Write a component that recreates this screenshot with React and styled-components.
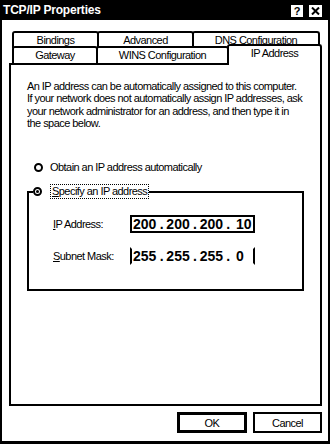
import React from "react";
import styled, { createGlobalStyle } from "styled-components";

const Global = createGlobalStyle`
  html, body { margin: 0; padding: 0; background: #fff; }
  body { font-family: "Liberation Sans", Arial, sans-serif; color: #000; }
  * { box-sizing: border-box; }
`;

const Window = styled.div`
  width: 330px;
  height: 444px;
  border-left: 2px solid #000;
  border-right: 2px solid #000;
  border-bottom: 3px solid #000;
  background: #fff;
  display: flex;
  flex-direction: column;
`;

const TitleBar = styled.div`
  height: 20px;
  flex: none;
  background: #000;
  color: #fff;
  display: flex;
  align-items: center;
  padding: 0 6px 0 1px;
  gap: 6px;
`;

const Title = styled.div`
  flex: 1;
  font-weight: bold;
  font-size: 12px;
  letter-spacing: -0.2px;
  white-space: nowrap;
`;

const CapButton = styled.div`
  width: ${(p) => p.$w}px;
  height: 12px;
  margin-top: 2px;
  background: #fff;
  color: #000;
  display: flex;
  align-items: center;
  justify-content: center;
  font-weight: bold;
  font-size: 11px;
  line-height: 1;
`;

const Body = styled.div`
  flex: 1;
  display: flex;
  flex-direction: column;
  padding: 11px 6px 8px 7px;
  font-size: 11px;
  letter-spacing: -0.55px;
`;

const TabRow = styled.div`
  display: flex;
  align-items: flex-end;
  height: 17px;
  padding-left: 3px;
  margin-top: ${(p) => (p.$second ? "-2px" : "0")};
`;

const Tab = styled.div`
  width: ${(p) => p.$w}px;
  height: ${(p) => (p.$active ? 21 : 17)}px;
  margin-bottom: ${(p) => (p.$active ? "-2px" : "0")};
  position: ${(p) => (p.$active ? "relative" : "static")};
  z-index: ${(p) => (p.$active ? 2 : "auto")};
  border: 2px solid #000;
  border-bottom: none;
  border-radius: 3px 3px 0 0;
  background: #fff;
  display: flex;
  align-items: center;
  justify-content: center;
  padding-bottom: ${(p) => (p.$active ? 6 : 2)}px;
  white-space: nowrap;
  & + & { margin-left: -2px; }
`;

const Panel = styled.div`
  flex: 1;
  border: 2px solid #000;
  padding: 15px 16px 0 16px;
  display: flex;
  flex-direction: column;
`;

const Para = styled.p`
  margin: 0;
  line-height: 12.3px;
  white-space: nowrap;
`;

const RadioRow = styled.label`
  display: flex;
  align-items: center;
  gap: 7px;
  height: 14px;
  margin: 31px 0 10px 7px;
`;

const Radio = styled.span`
  width: 9px;
  height: 9px;
  flex: none;
  border: 2px solid #000;
  border-radius: 50%;
  display: flex;
  align-items: center;
  justify-content: center;
  &::after {
    content: "";
    width: 3px;
    height: 3px;
    border-radius: 50%;
    background: ${(p) => (p.$checked ? "#000" : "transparent")};
  }
`;

const Group = styled.fieldset`
  margin: 0;
  padding: 0;
  border: 2px solid #000;
  min-width: 0;
`;

const Legend = styled.legend`
  margin-left: 4px;
  padding: 0;
  display: flex;
  align-items: center;
  gap: 8px;
  height: 15px;
`;

const Focus = styled.span`
  border: 1px dotted #000;
  padding: 0 1px;
  line-height: 13px;
  white-space: nowrap;
`;

const Fields = styled.div`
  display: grid;
  grid-template-columns: 77px 125px;
  row-gap: 14px;
  align-items: center;
  padding: 16px 0 24px 24px;
`;

const FieldLabel = styled.span`
  white-space: nowrap;
`;

const U = styled.span`
  text-decoration: underline;
`;

const IpBox = styled.div`
  height: 18px;
  border: 2px solid #000;
  border-top-color: ${(p) => (p.$open ? "transparent" : "#000")};
  border-bottom-color: ${(p) => (p.$open ? "transparent" : "#000")};
  display: flex;
  align-items: center;
  padding-left: 1px;
  font-size: 14px;
  font-weight: bold;
  letter-spacing: 0;
`;

const Octet = styled.span`
  width: ${(p) => (p.$last ? 20 : 24)}px;
  padding-left: ${(p) => (p.$last ? 3 : 0)}px;
  text-align: left;
`;

const Dot = styled.span`
  width: 9.5px;
  text-align: center;
`;

const Buttons = styled.div`
  display: flex;
  justify-content: flex-end;
  gap: 6px;
  margin-top: 6px;
`;

const Button = styled.button`
  width: ${(p) => (p.$default ? 70 : 69)}px;
  height: 21px;
  padding: 0;
  background: #fff;
  border: ${(p) => (p.$default ? 3 : 2)}px solid #000;
  border-radius: 0;
  font-family: inherit;
  font-size: 11px;
  letter-spacing: -0.55px;
  color: #000;
`;

function IpAddress({ parts, open }) {
  return (
    <IpBox $open={open}>
      {parts.map((p, i) => (
        <React.Fragment key={i}>
          {i > 0 && <Dot>.</Dot>}
          <Octet $last={i === parts.length - 1}>{p}</Octet>
        </React.Fragment>
      ))}
    </IpBox>
  );
}

export default function App() {
  return (
    <>
      <Global />
      <Window>
        <TitleBar>
          <Title>TCP/IP Properties</Title>
          <CapButton $w={12}>?</CapButton>
          <CapButton $w={13}>
            <svg width="9" height="8" viewBox="0 0 9 8">
              <path d="M1 0.5 L8 7.5 M8 0.5 L1 7.5" stroke="#000" strokeWidth="2" />
            </svg>
          </CapButton>
        </TitleBar>
        <Body>
          <TabRow>
            <Tab $w={87}>Bindings</Tab>
            <Tab $w={97}>Advanced</Tab>
            <Tab $w={128}>DNS Configuration</Tab>
          </TabRow>
          <TabRow $second>
            <Tab $w={86}>Gateway</Tab>
            <Tab $w={133}>WINS Configuration</Tab>
            <Tab $w={95} $active>IP Address</Tab>
          </TabRow>
          <Panel>
            <Para>
              An IP address can be automatically assigned to this computer.
              <br />
              If your network does not automatically assign IP addresses, ask
              <br />
              your network administrator for an address, and then type it in
              <br />
              the space below.
            </Para>
            <RadioRow>
              <Radio />
              <span>Obtain an IP address automatically</span>
            </RadioRow>
            <Group>
              <Legend>
                <Radio $checked />
                <Focus>
                  <U>S</U>pecify an IP address
                </Focus>
              </Legend>
              <Fields>
                <FieldLabel>
                  <U>I</U>P Address:
                </FieldLabel>
                <IpAddress parts={["200", "200", "200", "10"]} />
                <FieldLabel>
                  <U>S</U>ubnet Mask:
                </FieldLabel>
                <IpAddress parts={["255", "255", "255", "0"]} open />
              </Fields>
            </Group>
          </Panel>
          <Buttons>
            <Button $default>OK</Button>
            <Button>Cancel</Button>
          </Buttons>
        </Body>
      </Window>
    </>
  );
}
